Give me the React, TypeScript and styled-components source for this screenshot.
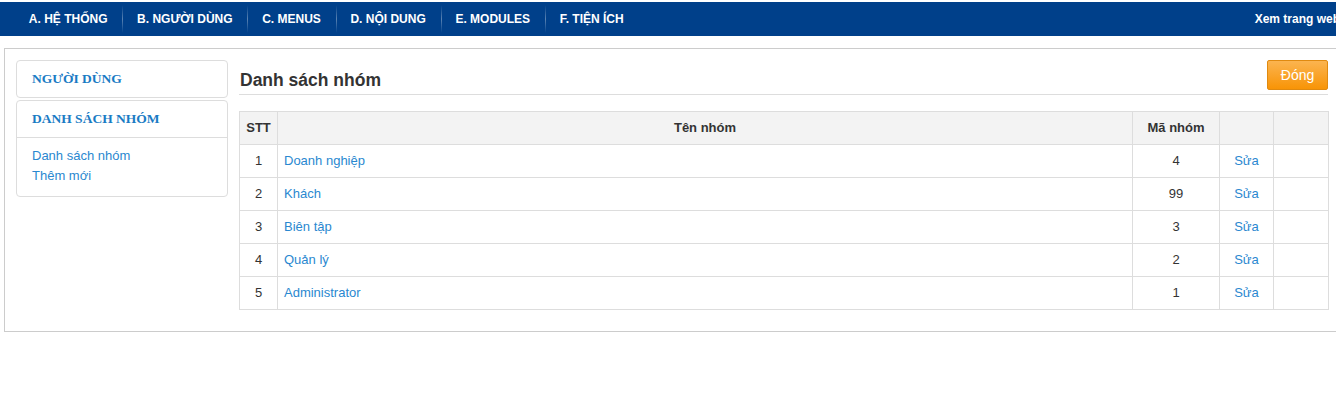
import styled, { createGlobalStyle } from "styled-components"

const GlobalStyle = createGlobalStyle`
  html, body {
    margin: 0;
    padding: 0;
    overflow: hidden;
    background: #fff;
  }
  body {
    width: 1344px;
    font-family: "Liberation Sans", Arial, sans-serif;
    font-size: 13px;
    color: #333;
  }
`

const menus = [
  "A. HỆ THỐNG",
  "B. NGƯỜI DÙNG",
  "C. MENUS",
  "D. NỘI DUNG",
  "E. MODULES",
  "F. TIỆN ÍCH"
]

const groups = [
  { stt: 1, name: "Doanh nghiệp", code: 4 },
  { stt: 2, name: "Khách", code: 99 },
  { stt: 3, name: "Biên tập", code: 3 },
  { stt: 4, name: "Quản lý", code: 2 },
  { stt: 5, name: "Administrator", code: 1 }
]

const TopBar = styled.nav`
  margin-top: 2px;
  height: 34px;
  background: #00408a;
  display: flex;
  align-items: center;
  padding-left: 14px;
  padding-right: 4px;
`

const MenuItem = styled.a<{ $last?: boolean }>`
  position: relative;
  display: flex;
  align-items: center;
  height: 34px;
  padding: 0 14.8px;
  color: #fff;
  font-weight: bold;
  font-size: 12px;
  text-decoration: none;
  white-space: nowrap;

  &::after {
    content: "";
    display: ${(p) => (p.$last ? "none" : "block")};
    position: absolute;
    right: -1px;
    top: 3px;
    bottom: 3px;
    width: 1px;
    background: linear-gradient(
      to bottom,
      rgba(255, 255, 255, 0),
      rgba(255, 255, 255, 0.35) 50%,
      rgba(255, 255, 255, 0)
    );
  }
`

const SiteLink = styled.a`
  margin-left: auto;
  color: #fff;
  font-weight: bold;
  font-size: 12px;
  white-space: nowrap;
  text-decoration: none;
`

const Frame = styled.div`
  margin: 12px 4px 0;
  border: 1px solid #ccc;
  padding: 11px;
  display: flex;
  align-items: flex-start;
  gap: 11px;
`

const Sidebar = styled.aside`
  width: 212px;
  flex-shrink: 0;
  display: flex;
  flex-direction: column;
  gap: 2px;
`

const Panel = styled.div`
  border: 1px solid #ddd;
  border-radius: 4px;
  background: #fff;
`

const PanelHeading = styled.div<{ $divided?: boolean }>`
  padding: 10px 15px;
  line-height: 16px;
  font-family: "Liberation Serif", "Times New Roman", serif;
  font-weight: bold;
  font-size: 13.5px;
  color: #1a7bc4;
  border-bottom: ${(p) => (p.$divided ? "1px solid #ddd" : "none")};
`

const PanelLinks = styled.div`
  padding: 8px 15px 10px;
  display: flex;
  flex-direction: column;
`

const SideLink = styled.a`
  line-height: 20px;
  font-size: 13px;
  color: #2a88d0;
  text-decoration: none;
`

const Content = styled.main`
  flex: 1;
  min-width: 0;
`

const Header = styled.div`
  height: 34px;
  border-bottom: 1px solid #ddd;
  display: flex;
  justify-content: space-between;
  align-items: flex-start;
`

const Title = styled.h1`
  margin: 0;
  padding: 10px 0 0 1px;
  line-height: 20px;
  font-size: 17.5px;
  font-weight: bold;
  color: #333;
`

const CloseButton = styled.button`
  width: 61px;
  height: 30px;
  border: 1px solid #e08a10;
  border-radius: 2px;
  background: linear-gradient(to bottom, #fbb450, #f89406);
  color: #fff;
  font-family: "Liberation Sans", Arial, sans-serif;
  font-size: 14px;
  padding: 0;
  cursor: pointer;
`

const Table = styled.table`
  width: 100%;
  margin: 16px 0 10px;
  border-collapse: collapse;
  table-layout: fixed;
`

const Th = styled.th`
  border: 1px solid #ddd;
  background: #f3f3f3;
  padding: 8px 0;
  line-height: 16px;
  font-weight: bold;
  font-size: 13px;
  text-align: center;
`

const Td = styled.td<{ $align?: "left" | "center" }>`
  border: 1px solid #ddd;
  padding: 8px 6px;
  line-height: 16px;
  text-align: ${(p) => p.$align ?? "center"};
`

const CellLink = styled.a`
  color: #2a88d0;
  text-decoration: none;
`

export default function App() {
  return (
    <>
      <GlobalStyle />
      <TopBar>
        {menus.map((m, i) => (
          <MenuItem key={m} $last={i === menus.length - 1}>
            {m}
          </MenuItem>
        ))}
        <SiteLink>Xem trang web</SiteLink>
      </TopBar>
      <Frame>
        <Sidebar>
          <Panel>
            <PanelHeading>NGƯỜI DÙNG</PanelHeading>
          </Panel>
          <Panel>
            <PanelHeading $divided>DANH SÁCH NHÓM</PanelHeading>
            <PanelLinks>
              <SideLink>Danh sách nhóm</SideLink>
              <SideLink>Thêm mới</SideLink>
            </PanelLinks>
          </Panel>
        </Sidebar>
        <Content>
          <Header>
            <Title>Danh sách nhóm</Title>
            <CloseButton>Đóng</CloseButton>
          </Header>
          <Table>
            <colgroup>
              <col style={{ width: 38 }} />
              <col style={{ width: 855 }} />
              <col style={{ width: 87 }} />
              <col style={{ width: 54 }} />
              <col style={{ width: 55 }} />
            </colgroup>
            <thead>
              <tr>
                <Th>STT</Th>
                <Th>Tên nhóm</Th>
                <Th>Mã nhóm</Th>
                <Th></Th>
                <Th></Th>
              </tr>
            </thead>
            <tbody>
              {groups.map((g) => (
                <tr key={g.stt}>
                  <Td>{g.stt}</Td>
                  <Td $align="left">
                    <CellLink>{g.name}</CellLink>
                  </Td>
                  <Td>{g.code}</Td>
                  <Td>
                    <CellLink>Sửa</CellLink>
                  </Td>
                  <Td></Td>
                </tr>
              ))}
            </tbody>
          </Table>
        </Content>
      </Frame>
    </>
  )
}
